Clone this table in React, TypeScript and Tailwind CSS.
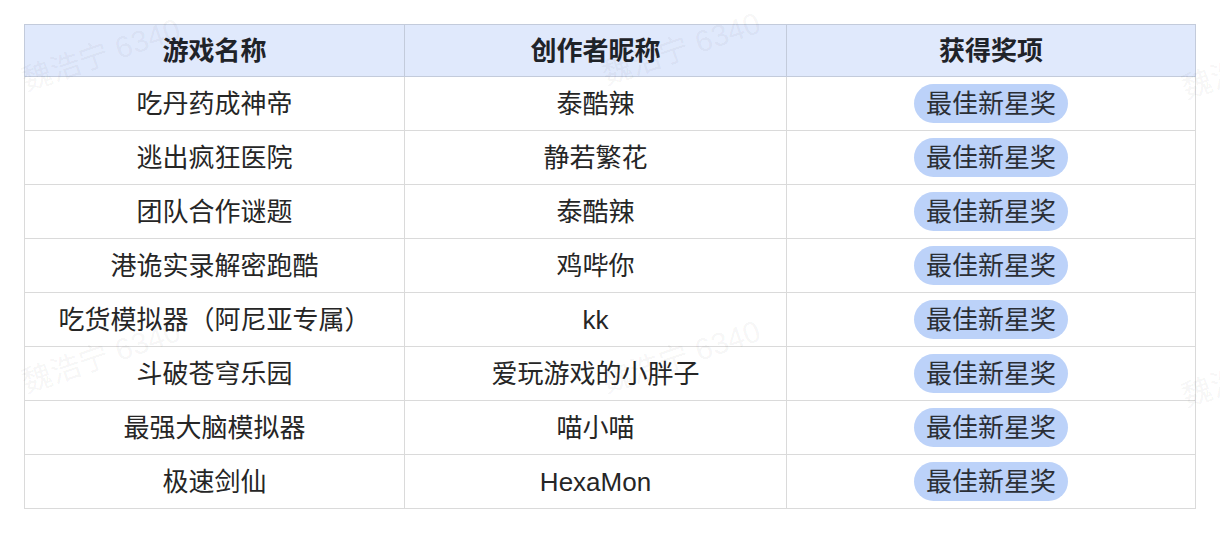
import React from 'react';

const rows: [string, string][] = [
  ['吃丹药成神帝', '泰酷辣'],
  ['逃出疯狂医院', '静若繁花'],
  ['团队合作谜题', '泰酷辣'],
  ['港诡实录解密跑酷', '鸡哔你'],
  ['吃货模拟器（阿尼亚专属）', 'kk'],
  ['斗破苍穹乐园', '爱玩游戏的小胖子'],
  ['最强大脑模拟器', '喵小喵'],
  ['极速剑仙', 'HexaMon'],
];

const font = { fontFamily: '"Liberation Sans", "Noto Sans CJK SC", sans-serif' };

// watermark spots (over the table)
const marks = [
  { left: 28, top: 66 },
  { left: 608, top: 60 },
  { left: 1188, top: 74 },
  { left: 28, top: 368 },
  { left: 608, top: 368 },
  { left: 1188, top: 382 },
];

export default function App() {
  return (
    <div className="relative w-[1220px] h-[534px] overflow-hidden bg-white" style={font}>
      <div className="p-6">
        <div className="grid grid-cols-[381px_382px_409px] text-[26px] leading-none">
          {['游戏名称', '创作者昵称', '获得奖项'].map((h, i) => (
            <div
              key={h}
              className={
                'h-[53px] flex items-center justify-center bg-[#e0e9fc] border-t border-b border-r border-[#c3cbdb] font-bold text-[#1f2329]' +
                (i === 0 ? ' border-l' : '')
              }
            >
              {h}
            </div>
          ))}
          {rows.map(([game, author]) => (
            <React.Fragment key={game}>
              <div className="h-[54px] flex items-center justify-center border-l border-r border-b border-[#dadada] text-[#262626]">
                {game}
              </div>
              <div className="h-[54px] flex items-center justify-center border-r border-b border-[#dadada] text-[#262626]">
                {author}
              </div>
              <div className="h-[54px] flex items-center justify-center border-r border-b border-[#dadada]">
                <span className="h-[39px] px-3 flex items-center rounded-full bg-[#bcd2f9] text-[#2b2f36]">
                  最佳新星奖
                </span>
              </div>
            </React.Fragment>
          ))}
        </div>
      </div>
      <div className="pointer-events-none absolute inset-0">
        {marks.map((m, i) => (
          <span
            key={i}
            className="absolute whitespace-nowrap text-[30px] leading-none text-black/[0.05] origin-bottom-left -rotate-[19deg]"
            style={{ left: m.left, top: m.top }}
          >
            魏浩宁 6340
          </span>
        ))}
      </div>
    </div>
  );
}
